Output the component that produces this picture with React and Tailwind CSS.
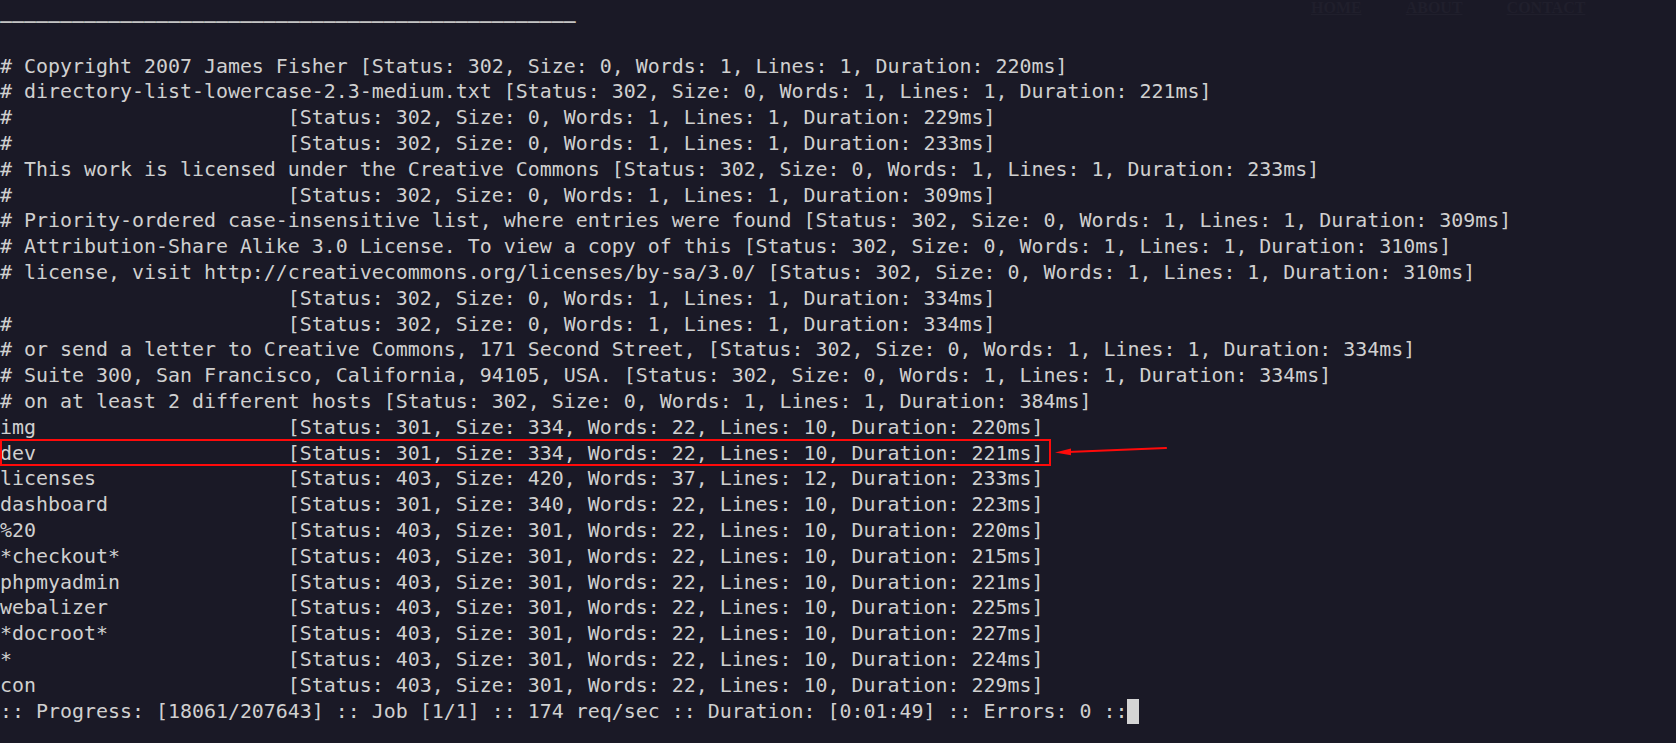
import React from "react";

const pad = (s) => s.padEnd(24, " ");
const st = (status, size, words, lines, dur) =>
  `[Status: ${status}, Size: ${size}, Words: ${words}, Lines: ${lines}, Duration: ${dur}ms]`;

const lines = [
  "# Copyright 2007 James Fisher " + st(302, 0, 1, 1, 220),
  "# directory-list-lowercase-2.3-medium.txt " + st(302, 0, 1, 1, 221),
  pad("#") + st(302, 0, 1, 1, 229),
  pad("#") + st(302, 0, 1, 1, 233),
  "# This work is licensed under the Creative Commons " + st(302, 0, 1, 1, 233),
  pad("#") + st(302, 0, 1, 1, 309),
  "# Priority-ordered case-insensitive list, where entries were found " + st(302, 0, 1, 1, 309),
  "# Attribution-Share Alike 3.0 License. To view a copy of this " + st(302, 0, 1, 1, 310),
  "# license, visit http://creativecommons.org/licenses/by-sa/3.0/ " + st(302, 0, 1, 1, 310),
  pad("") + st(302, 0, 1, 1, 334),
  pad("#") + st(302, 0, 1, 1, 334),
  "# or send a letter to Creative Commons, 171 Second Street, " + st(302, 0, 1, 1, 334),
  "# Suite 300, San Francisco, California, 94105, USA. " + st(302, 0, 1, 1, 334),
  "# on at least 2 different hosts " + st(302, 0, 1, 1, 384),
  pad("img") + st(301, 334, 22, 10, 220),
  pad("dev") + st(301, 334, 22, 10, 221),
  pad("licenses") + st(403, 420, 37, 12, 233),
  pad("dashboard") + st(301, 340, 22, 10, 223),
  pad("%20") + st(403, 301, 22, 10, 220),
  pad("*checkout*") + st(403, 301, 22, 10, 215),
  pad("phpmyadmin") + st(403, 301, 22, 10, 221),
  pad("webalizer") + st(403, 301, 22, 10, 225),
  pad("*docroot*") + st(403, 301, 22, 10, 227),
  pad("*") + st(403, 301, 22, 10, 224),
  pad("con") + st(403, 301, 22, 10, 229),
];

const progress =
  ":: Progress: [18061/207643] :: Job [1/1] :: 174 req/sec :: Duration: [0:01:49] :: Errors: 0 ::";

export default function App() {
  return (
    <div className="relative w-[1676px] h-[743px] overflow-hidden bg-[#1a1926]">
      {/* faint ghost nav */}
      <div
        className="absolute top-0 left-[1311px] flex gap-[44px] text-[16px] leading-[16px] font-bold underline text-[#201f2c]"
        style={{ fontFamily: '"Liberation Serif", serif' }}
      >
        <span>HOME</span>
        <span>ABOUT</span>
        <span>CONTACT</span>
      </div>

      <div
        className="pt-[2px] text-[19.93px] leading-[25.8px] text-[#d0d0d0] whitespace-pre"
        style={{ fontFamily: '"DejaVu Sans Mono", monospace' }}
      >
        <div className="h-[22.8px] leading-[19.8px] font-bold text-[#c4c4c4]">
          {"________________________________________________"}
        </div>
        <div className="h-[28.8px]" />
        {lines.map((l, i) => (
          <div key={i} className="h-[25.8px]">
            {l}
          </div>
        ))}
        <div className="h-[25.8px] flex items-start">
          <span>{progress}</span>
          <span className="inline-block w-[12px] h-[25.8px] bg-[#d4d4d4]" />
        </div>
      </div>

      {/* red annotation box */}
      <div className="absolute left-0 top-[439px] w-[1051px] h-[27px] border-2 border-[#ff0a0a]" />
      {/* red arrow */}
      <svg
        className="absolute left-[1050px] top-[440px]"
        width="120"
        height="20"
        viewBox="0 0 120 20"
      >
        <line x1="18" y1="12" x2="116" y2="8" stroke="#ff0a0a" strokeWidth="2.2" strokeLinecap="round" />
        <polygon points="5,12.4 21,8.6 21,15.2" fill="#ff0a0a" />
      </svg>
    </div>
  );
}
